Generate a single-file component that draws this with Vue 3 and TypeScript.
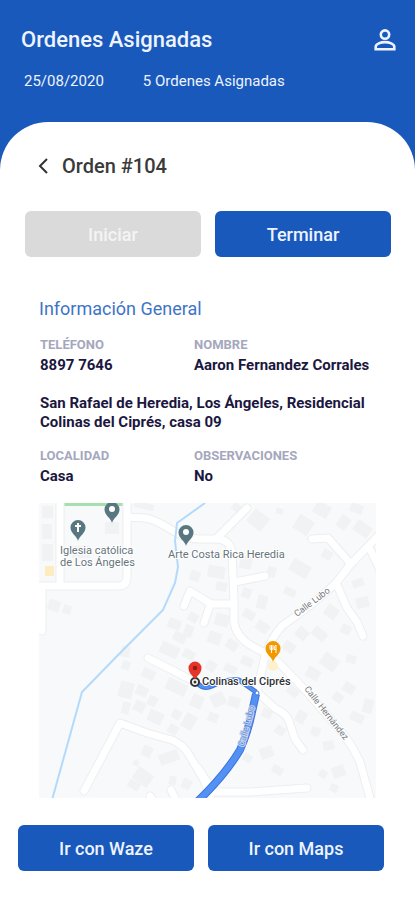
<script setup lang="ts">
interface Detail {
  label: string
  value: string
}

interface Block {
  x: number
  y: number
  w: number
  h: number
  a: number
}

const contact: Detail[] = [
  { label: 'TELÉFONO', value: '8897 7646' },
  { label: 'NOMBRE', value: 'Aaron Fernandez Corrales' },
]

const place: Detail[] = [
  { label: 'LOCALIDAD', value: 'Casa' },
  { label: 'OBSERVACIONES', value: 'No' },
]

const roads: string[] = [
  'M60 500V585M36 586H118Q127 586 127 577V500M42 586V631',
  'M127 517L145 518Q153 519 165 526L177 533Q187 539 200 539H218Q230 540 232 553L234 600V622Q236 636 250 645L263 652Q275 658 284 668L307 692L333 722Q350 740 360 762L371 802',
  'M217 538L247 508',
  'M235 582L265 576',
  'M233 604H211L200 597L190 591L184 606M210 605L204 623',
  'M379 535L350 565L336 583Q320 598 300 613L282 626Q271 638 265 656L257 692',
  'M312 539L328 538L350 563',
  'M337 585L347 608L357 622L363 636',
  'M370 549L380 570',
  'M148 658L170 669L195 682',
  'M84 791L120 723L147 733L172 740Q182 744 188 753L204 780L212 802',
  'M198 768L214 792L250 792L307 788',
  'M258 693L276 709Q288 714 290 724L295 739L303 750',
  'M150 796L156 804M171 790L178 804',
]

const blocks: Block[] = [
  { x: 42, y: 506, w: 11, h: 12, a: 0 },
  { x: 42, y: 524, w: 10, h: 15, a: 0 },
  { x: 42, y: 544, w: 11, h: 17, a: 0 },
  { x: 105, y: 522, w: 14, h: 12, a: 0 },
  { x: 72, y: 546, w: 18, h: 12, a: 0 },
  { x: 48, y: 600, w: 12, h: 11, a: 20 },
  { x: 63, y: 605, w: 8, h: 9, a: 15 },
  { x: 134, y: 503, w: 20, h: 6, a: 12 },
  { x: 232, y: 504, w: 10, h: 8, a: 40 },
  { x: 249, y: 512, w: 18, h: 16, a: 38 },
  { x: 276, y: 508, w: 7, h: 6, a: 20 },
  { x: 295, y: 517, w: 17, h: 16, a: 32 },
  { x: 314, y: 503, w: 16, h: 13, a: 30 },
  { x: 338, y: 516, w: 11, h: 13, a: 35 },
  { x: 350, y: 504, w: 13, h: 9, a: 20 },
  { x: 354, y: 523, w: 17, h: 12, a: 35 },
  { x: 322, y: 550, w: 10, h: 9, a: 30 },
  { x: 290, y: 562, w: 20, h: 13, a: 30 },
  { x: 240, y: 556, w: 12, h: 13, a: 12 },
  { x: 267, y: 567, w: 9, h: 10, a: 15 },
  { x: 208, y: 566, w: 17, h: 12, a: 10 },
  { x: 216, y: 582, w: 11, h: 9, a: 10 },
  { x: 190, y: 571, w: 10, h: 10, a: 20 },
  { x: 242, y: 588, w: 9, h: 10, a: 20 },
  { x: 257, y: 595, w: 10, h: 14, a: 15 },
  { x: 243, y: 610, w: 12, h: 9, a: 30 },
  { x: 256, y: 622, w: 13, h: 10, a: 35 },
  { x: 215, y: 614, w: 14, h: 12, a: 15 },
  { x: 208, y: 632, w: 13, h: 12, a: 20 },
  { x: 226, y: 640, w: 12, h: 10, a: 35 },
  { x: 188, y: 613, w: 10, h: 9, a: 30 },
  { x: 168, y: 619, w: 13, h: 10, a: 20 },
  { x: 184, y: 625, w: 9, h: 12, a: 20 },
  { x: 173, y: 633, w: 13, h: 9, a: 30 },
  { x: 160, y: 644, w: 19, h: 12, a: 25 },
  { x: 183, y: 650, w: 12, h: 9, a: 25 },
  { x: 121, y: 646, w: 9, h: 11, a: 10 },
  { x: 122, y: 661, w: 8, h: 9, a: 20 },
  { x: 142, y: 669, w: 13, h: 10, a: 25 },
  { x: 119, y: 682, w: 14, h: 16, a: 15 },
  { x: 136, y: 686, w: 12, h: 10, a: 25 },
  { x: 122, y: 702, w: 8, h: 12, a: 15 },
  { x: 134, y: 701, w: 11, h: 11, a: 25 },
  { x: 148, y: 696, w: 9, h: 10, a: 25 },
  { x: 148, y: 711, w: 15, h: 12, a: 25 },
  { x: 166, y: 681, w: 21, h: 12, a: 25 },
  { x: 191, y: 695, w: 12, h: 13, a: 25 },
  { x: 172, y: 710, w: 9, h: 9, a: 30 },
  { x: 183, y: 714, w: 12, h: 15, a: 30 },
  { x: 168, y: 725, w: 10, h: 9, a: 30 },
  { x: 142, y: 746, w: 10, h: 11, a: 25 },
  { x: 133, y: 760, w: 6, h: 6, a: 30 },
  { x: 159, y: 752, w: 20, h: 11, a: 340 },
  { x: 134, y: 770, w: 18, h: 14, a: 35 },
  { x: 128, y: 781, w: 12, h: 8, a: 30 },
  { x: 169, y: 776, w: 7, h: 9, a: 10 },
  { x: 182, y: 779, w: 9, h: 10, a: 25 },
  { x: 211, y: 693, w: 14, h: 13, a: 335 },
  { x: 228, y: 697, w: 12, h: 10, a: 15 },
  { x: 208, y: 713, w: 10, h: 9, a: 20 },
  { x: 224, y: 665, w: 13, h: 8, a: 25 },
  { x: 206, y: 661, w: 10, h: 10, a: 30 },
  { x: 241, y: 657, w: 12, h: 9, a: 25 },
  { x: 262, y: 709, w: 10, h: 9, a: 25 },
  { x: 275, y: 726, w: 10, h: 9, a: 35 },
  { x: 296, y: 711, w: 10, h: 12, a: 30 },
  { x: 287, y: 687, w: 12, h: 9, a: 40 },
  { x: 260, y: 747, w: 13, h: 11, a: 340 },
  { x: 243, y: 754, w: 9, h: 8, a: 30 },
  { x: 272, y: 766, w: 11, h: 8, a: 30 },
  { x: 311, y: 727, w: 9, h: 9, a: 20 },
  { x: 323, y: 741, w: 11, h: 9, a: 350 },
  { x: 319, y: 770, w: 8, h: 8, a: 35 },
  { x: 332, y: 766, w: 13, h: 11, a: 340 },
  { x: 330, y: 784, w: 8, h: 8, a: 25 },
  { x: 306, y: 668, w: 14, h: 11, a: 30 },
  { x: 321, y: 655, w: 17, h: 14, a: 35 },
  { x: 296, y: 628, w: 12, h: 11, a: 40 },
  { x: 312, y: 629, w: 15, h: 10, a: 40 },
  { x: 283, y: 642, w: 12, h: 10, a: 35 },
  { x: 325, y: 606, w: 13, h: 12, a: 35 },
  { x: 341, y: 625, w: 10, h: 9, a: 25 },
  { x: 356, y: 597, w: 13, h: 11, a: 350 },
  { x: 352, y: 579, w: 12, h: 8, a: 340 },
  { x: 343, y: 683, w: 12, h: 10, a: 30 },
  { x: 333, y: 693, w: 10, h: 9, a: 35 },
  { x: 350, y: 713, w: 14, h: 9, a: 25 },
  { x: 363, y: 699, w: 10, h: 14, a: 15 },
  { x: 346, y: 655, w: 10, h: 8, a: 15 },
  { x: 284, y: 588, w: 12, h: 8, a: 25 },
]

const spin = (b: Block): string => `rotate(${b.a} ${b.x + b.w / 2} ${b.y + b.h / 2})`
</script>

<template>
  <div class="screen">
    <header class="top">
      <div class="top-row">
        <h1>Ordenes Asignadas</h1>
        <button class="profile" type="button" aria-label="Perfil">
          <svg viewBox="0 0 22 22" aria-hidden="true">
            <circle cx="11" cy="5.6" r="4.2" />
            <path d="M1.700 20.200v-2.400c0-3 5.200-4.700 9.300-4.700s9.300 1.700 9.300 4.700v2.400z" />
          </svg>
        </button>
      </div>
      <p class="summary">
        <span>25/08/2020</span>
        <span>5 Ordenes Asignadas</span>
      </p>
    </header>

    <main class="sheet">
      <div class="order">
        <button class="back" type="button" aria-label="Volver">
          <svg viewBox="0 0 10 16" aria-hidden="true"><path d="M9 1L2 8l7 7" /></svg>
        </button>
        <h2>Orden #104</h2>
      </div>

      <div class="actions">
        <button class="btn" type="button" disabled>Iniciar</button>
        <button class="btn" type="button">Terminar</button>
      </div>

      <section class="info">
        <h3>Información General</h3>
        <dl class="pair">
          <div v-for="d in contact" :key="d.label">
            <dt>{{ d.label }}</dt>
            <dd>{{ d.value }}</dd>
          </div>
        </dl>
        <p class="address">San Rafael de Heredia, Los Ángeles, Residencial Colinas del Ciprés, casa 09</p>
        <dl class="pair">
          <div v-for="d in place" :key="d.label">
            <dt>{{ d.label }}</dt>
            <dd>{{ d.value }}</dd>
          </div>
        </dl>

        <svg class="map" viewBox="39 503 337 295" role="img" aria-label="Mapa">
          <defs>
            <path id="pin" d="M0 13C-1 8-7.500 5.500-7.500-.5A7.500 7.500 0 0 1 7.500-.5C7.500 5.500 1 8 0 13z" />
          </defs>
          <rect x="39" y="503" width="337" height="295" fill="#f8f9fa" />
          <rect x="64" y="503" width="59" height="3" fill="#a8dfae" />
          <g fill="#f1f2f3">
            <rect
              v-for="(b, i) in blocks"
              :key="i"
              :x="b.x"
              :y="b.y"
              :width="b.w"
              :height="b.h"
              :transform="spin(b)"
            />
          </g>
          <rect x="45" y="566" width="9" height="10" fill="#fcecc0" />
          <g class="road-edge"><path v-for="r in roads" :key="r" :d="r" /></g>
          <g class="road"><path v-for="r in roads" :key="r" :d="r" /></g>
          <circle cx="273" cy="666" r="5" fill="#fdf0cd" />
          <path
            class="river"
            d="M205 503L177 523L175 541L178 567L175 583L163 610L123 650L82 692L52 800"
          />

          <path class="route-edge" d="M256 694L252 712Q248 732 240 750Q225 775 198 801" />
          <path class="route" d="M256 694L252 712Q248 732 240 750Q225 775 198 801" />
          <path class="route-edge thin" d="M197 683Q204 690 212 686Q224 679 239 680L256 692" />
          <path class="route thin" d="M197 683Q204 690 212 686Q224 679 239 680L256 692" />
          <circle cx="257" cy="693" r="2" fill="#fff" stroke="#4274d6" />

          <g fill="#587781">
            <use href="#pin" x="78" y="528" />
            <use href="#pin" x="112" y="510" />
            <use href="#pin" x="186" y="533" />
          </g>
          <path d="M78 523v9M75 526h6" stroke="#fff" stroke-width="2" />
          <circle cx="112" cy="509" r="3" fill="#fff" />
          <circle cx="186" cy="532" r="3" fill="#fff" />

          <use href="#pin" x="273" y="649" fill="#f29900" />
          <path
            d="M270 645v3q0 2 1.500 2t1.500-2v-3M271.500 645v8M276 653v-8q-2 1-2 4.500h2"
            fill="none"
            stroke="#fff"
          />

          <g class="place">
            <text x="60" y="554">Iglesia católica</text>
            <text x="60" y="566">de Los Ángeles</text>
            <text x="168" y="558">Arte Costa Rica Heredia</text>
          </g>
          <g class="street">
            <text transform="translate(297 617) rotate(-37)">Calle Lubo</text>
            <text transform="translate(304 689) rotate(52)">Calle Hernández</text>
            <text class="on-route" transform="translate(244 747) rotate(-75)">Calle Lubo</text>
          </g>

          <circle cx="195" cy="682" r="4" fill="#fff" stroke="#333" stroke-width="2" />
          <circle cx="195" cy="682" r="1.500" fill="#333" />
          <path
            d="M195 680C194 676 188.500 674 188.500 668a6.500 6.500 0 0 1 13 0C201.500 674 196 676 195 680z"
            fill="#e5352b"
          />
          <circle cx="195" cy="668" r="2.300" fill="#981b16" />
          <text class="target" x="202" y="685">Colinas del Ciprés</text>
        </svg>
      </section>

      <div class="actions go">
        <button class="btn" type="button">Ir con Waze</button>
        <button class="btn" type="button">Ir con Maps</button>
      </div>
    </main>
  </div>
</template>

<style>
body {
  background: #fff;
}
</style>

<style scoped>
.screen {
  min-height: 100vh;
  display: flex;
  flex-direction: column;
  background: #1859bb;
  font-family: Roboto, 'Liberation Sans', sans-serif;
}

h1,
h2,
h3,
p,
dl,
dd {
  margin: 0;
}

button {
  border: 0;
  padding: 0;
  background: none;
  font: inherit;
  cursor: pointer;
}

.top {
  padding: 27px 19px 31px 21px;
  color: #eef3ff;
}

.top-row {
  display: flex;
  justify-content: space-between;
  align-items: center;
}

h1 {
  font-size: 22px;
  line-height: 26px;
  font-weight: 500;
}

.profile {
  width: 22px;
  height: 22px;
}

.profile svg {
  display: block;
  fill: none;
  stroke: #eef3ff;
  stroke-width: 2.6;
}

.summary {
  display: flex;
  gap: 39px;
  margin-top: 18px;
  padding-left: 3px;
  font-size: 15px;
  line-height: 20px;
}

.sheet {
  flex: 1;
  padding-top: 32px;
  border-radius: 48px 48px 0 0;
  background: #fff;
}

.order {
  display: flex;
  align-items: center;
  gap: 14px;
  padding-left: 38px;
}

.back {
  width: 10px;
  height: 16px;
}

.back svg {
  display: block;
  fill: none;
  stroke: #333;
  stroke-width: 2;
}

h2 {
  color: #3a3a3a;
  font-size: 20px;
  line-height: 24px;
  font-weight: 500;
}

.actions {
  display: flex;
  gap: 14px;
  margin-top: 33px;
  padding: 0 24px 0 25px;
}

.btn {
  flex: 1;
  height: 46px;
  border-radius: 6px;
  background: #1859bb;
  color: #eef3ff;
  font-size: 18px;
  font-weight: 500;
}

.btn:disabled {
  background: #dadada;
  color: #f4f4f4;
  cursor: default;
}

.info {
  padding: 40px 39px 0;
}

h3 {
  color: #3e74c6;
  font-size: 18px;
  line-height: 24px;
  font-weight: 400;
}

.pair {
  display: grid;
  grid-template-columns: 154px 1fr;
  margin: 16px 0 0 1px;
}

dt {
  color: #a5a7bd;
  font-size: 13px;
  line-height: 16px;
  font-weight: 700;
}

dd,
.address {
  color: #1b1740;
  font-size: 15px;
  line-height: 19px;
  font-weight: 700;
  white-space: nowrap;
}

dd {
  margin-top: 3px;
}

.address {
  margin: 19px 0 0 1px;
  white-space: normal;
}

.map {
  display: block;
  width: 100%;
  margin-top: 17px;
}

.road-edge path,
.road path {
  fill: none;
  stroke: #eceeef;
  stroke-width: 9;
  stroke-linecap: round;
  stroke-linejoin: round;
}

.road path {
  stroke: #fff;
  stroke-width: 7;
}

.river {
  fill: none;
  stroke: #b4dafb;
  stroke-width: 2;
}

.route,
.route-edge {
  fill: none;
  stroke: #5491f5;
  stroke-width: 6;
  stroke-linejoin: round;
}

.route-edge {
  stroke: #3c74d8;
  stroke-width: 8;
}

.route.thin {
  stroke-width: 3;
}

.route-edge.thin {
  stroke-width: 5;
}

.place,
.street,
.target {
  fill: #66757c;
  stroke: #fff;
  stroke-width: 2;
  paint-order: stroke;
  font-size: 11px;
}

.street {
  fill: #75797e;
  font-size: 9px;
}

.on-route {
  fill: #6d8fcb;
  stroke: #c4d6f5;
}

.target {
  fill: #303236;
  font-weight: 500;
}

.go {
  margin-top: 27px;
  padding: 0 31px 29px 18px;
}
</style>
